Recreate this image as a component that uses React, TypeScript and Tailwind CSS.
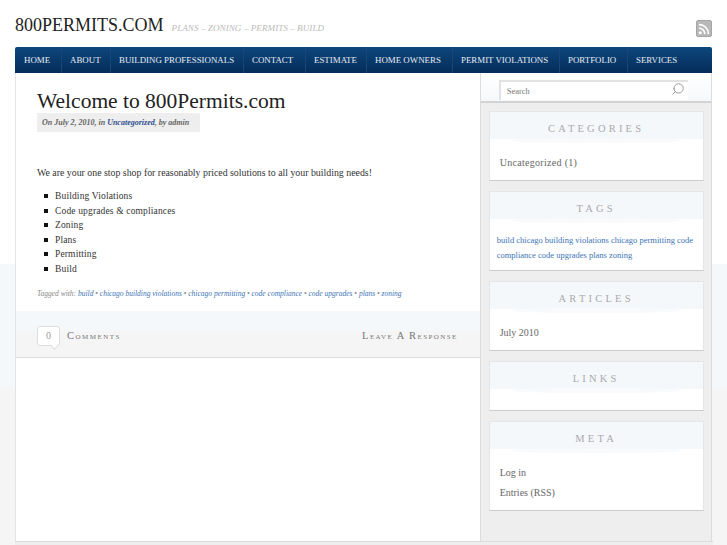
import { Search } from 'lucide-react';

const navItems = [
  { label: 'HOME', width: 'w-[46px]' },
  { label: 'ABOUT', width: 'w-[49px]' },
  { label: 'BUILDING PROFESSIONALS', width: 'w-[133px]' },
  { label: 'CONTACT', width: 'w-[62px]' },
  { label: 'ESTIMATE', width: 'w-[61px]' },
  { label: 'HOME OWNERS', width: 'w-[86px]' },
  { label: 'PERMIT VIOLATIONS', width: 'w-[107px]' },
  { label: 'PORTFOLIO', width: 'w-[68px]' },
  { label: 'SERVICES', width: 'w-[70px]' },
];

const listItems = ['Building Violations', 'Code upgrades & compliances', 'Zoning', 'Plans', 'Permitting', 'Build'];
const postTags = ['build', 'chicago building violations', 'chicago permitting', 'code compliance', 'code upgrades', 'plans', 'zoning'];

function RssIcon() {
  return (
    <svg width="16" height="17" viewBox="0 0 16 17" className="mb-[1px]">
      <rect x="0.5" y="0.5" width="15" height="16" rx="1.5" fill="#b9b9b9" stroke="#a5a5a5" />
      <circle cx="4.2" cy="12.8" r="1.5" fill="#fff" />
      <path d="M3 8.2a5.6 5.6 0 0 1 5.8 5.8" fill="none" stroke="#fff" strokeWidth="1.6" />
      <path d="M3 4.6a9.2 9.2 0 0 1 9.4 9.4" fill="none" stroke="#fff" strokeWidth="1.6" />
    </svg>
  );
}

function Widget({ title, children }: { title: string; children?: React.ReactNode }) {
  return (
    <section className="w-[215px] bg-white border border-[#e6e6e6] border-b-[#cccccc]">
      <div className="h-[27px] pt-[6px] bg-[#f5f8fb] flex items-center justify-center">
        <h3 className="text-[10.5px] text-[#aaaaaa] tracking-[3.2px]">{title}</h3>
      </div>
      <div className="h-[5px] mx-[20px] -mt-[1px] rounded-[50%] bg-[#f8fafb]" />
      <div className="-mt-[4px]">{children}</div>
    </section>
  );
}

export default function App() {
  return (
    <div className="w-[727px] h-[545px] overflow-hidden font-['Liberation_Serif',serif] bg-[linear-gradient(#ffffff_0,#ffffff_264px,#f5f8fb_264px,#f5f8fb_388px,#f5f5f5_388px)]">
      <header className="h-[47px] flex justify-between items-end pl-[15px] pr-[15px]">
        <div className="flex items-baseline mb-[11px]">
          <a className="text-[18px] text-[#222] leading-none">800PERMITS.COM</a>
          <span className="ml-[8px] text-[9.2px] italic text-[#bbb]">PLANS – ZONING – PERMITS – BUILD</span>
        </div>
        <div className="mb-[9px]">
          <RssIcon />
        </div>
      </header>

      <nav className="mx-[15px] h-[26px] bg-[linear-gradient(#0d477d,#052c59)] rounded-t-[2px] flex">
        {navItems.map((item, i) => (
          <a
            key={item.label}
            className={`${item.width} shrink-0 flex items-center pt-[2px] whitespace-nowrap text-[8.9px] text-[#e6edf4] ${i > 0 ? 'pl-[8px] border-l border-[#1a4676]' : 'pl-[9px]'}`}
          >
            {item.label}
          </a>
        ))}
      </nav>

      <div className="mx-[15px] h-[468px] flex border-l border-[#e4e4e4]">
        <main className="w-[465px] bg-white flex flex-col">
          <div className="pl-[21px] h-[238px]">
            <h1 className="mt-[16px] text-[21.5px] leading-[24px] text-[#222]">Welcome to 800Permits.com</h1>
            <div className="w-[163px] h-[19px] bg-[#eeeeee] flex items-center pl-[5px] whitespace-nowrap text-[8px] italic font-semibold text-[#666]">
              <span>
                On July 2, 2010, in <a className="text-[#2f4f8f]">Uncategorized</a>, by admin
              </span>
            </div>
            <p className="mt-[34px] text-[9.85px] leading-[14px] text-[#333]">
              We are your one stop shop for reasonably priced solutions to all your building needs!
            </p>
            <ul className="mt-[9px] pl-[7px]">
              {listItems.map((item) => (
                <li key={item} className="h-[14.5px] flex items-center text-[9.5px] text-[#333] tracking-[0.15px]">
                  <span className="w-[4px] h-[4px] bg-[#111] mr-[7px]" />
                  {item}
                </li>
              ))}
            </ul>
            <p className="mt-[12px] text-[7.5px] italic text-[#888]">
              Tagged with:{' '}
              {postTags.map((tag, i) => (
                <span key={tag}>
                  <a className="text-[#3d74b5]">{tag}</a>
                  {i < postTags.length - 1 ? ' • ' : ''}
                </span>
              ))}
            </p>
          </div>

          <div className="h-[47px] pt-[4px] border-b border-[#dddddd] bg-[linear-gradient(#f5f8fb_0,#f5f8fb_20px,#f5f5f5_20px)] flex items-center justify-between pl-[21px] pr-[22px]">
            <div className="flex items-center">
              <div className="relative w-[23px] h-[20px] bg-white border border-[#ddd] rounded-[3px] flex items-center justify-center text-[10px] text-[#999] mb-[1px]">
                0
                <span className="absolute right-[2px] bottom-[-4px] w-[5px] h-[5px] bg-white border-r border-b border-[#ddd] rotate-45" />
              </div>
              <span className="ml-[7px] text-[10.5px] text-[#777] tracking-[1.5px] [font-variant:small-caps]">Comments</span>
            </div>
            <span className="text-[10.5px] text-[#777] tracking-[1.4px] [font-variant:small-caps]">Leave A Response</span>
          </div>

          <div className="flex-1" />
        </main>

        <aside className="w-[233px] bg-[#eeeeee] border-x border-[#dcdcdc] flex flex-col">
          <div className="h-[30px] bg-[linear-gradient(#ffffff_0,#f5f8fb_100%)] border-b-2 border-[#d2d2d2] pl-[18px] pt-[7px]">
            <div className="w-[189px] h-[20px] bg-white border-l-2 border-t-2 border-[#e2e2e2] flex items-center justify-between pl-[6px] pr-[3px]">
              <span className="text-[8.5px] text-[#777]">Search</span>
              <Search size={14} strokeWidth={1.7} className="text-[#999] scale-x-[-1] mb-[4px]" />
            </div>
          </div>

          <div className="pl-[8px] pt-[8px] flex flex-col gap-[10px]">
            <Widget title="CATEGORIES">
              <div className="h-[41px] pl-[10px] pt-[16px] text-[10px] tracking-[0.3px] leading-[15px] text-[#666]">Uncategorized (1)</div>
            </Widget>
            <Widget title="TAGS">
              <div className="h-[51px] pl-[7px] pr-[4px] pt-[14px] text-[8.5px] leading-[15px] text-[#3d74b5]">
                build chicago building violations chicago permitting code compliance code upgrades plans zoning
              </div>
            </Widget>
            <Widget title="ARTICLES">
              <div className="h-[41px] pl-[10px] pt-[16px] text-[10px] leading-[15px] text-[#666]">July 2010</div>
            </Widget>
            <Widget title="LINKS">
              <div className="h-[21px]" />
            </Widget>
            <Widget title="META">
              <div className="h-[61px] pl-[10px] pt-[16px] text-[10px] leading-[15px] text-[#666]">
                <div>Log in</div>
                <div className="mt-[5px]">Entries (RSS)</div>
              </div>
            </Widget>
          </div>
        </aside>
      </div>

      <div className="ml-[15px] w-[698px] h-[4px] bg-[#eeeeee] border-t border-[#dcdcdc]" />
    </div>
  );
}
